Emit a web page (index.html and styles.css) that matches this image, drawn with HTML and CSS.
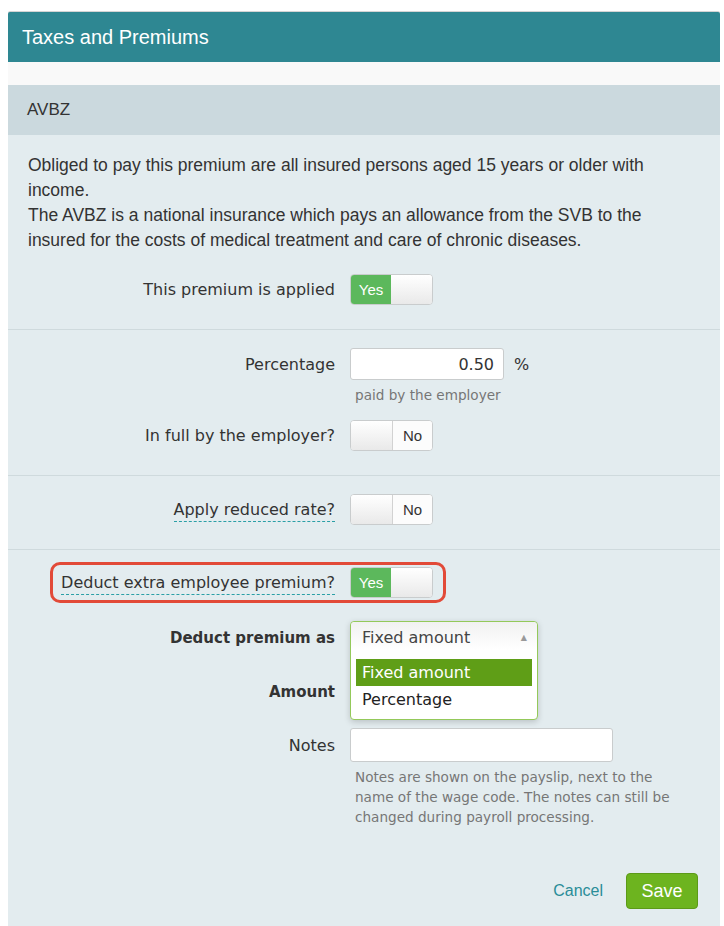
FILE: index.html
```html
<!DOCTYPE html>
<html lang="en">
<head>
  <meta charset="UTF-8">
  <title>Taxes and Premiums</title>
  <meta name="viewport" content="width=device-width, initial-scale=1.0">
  <link rel="stylesheet" href="styles.css">
</head>
<body>
  <div class="panel">
    <div class="panel-title">Taxes and Premiums</div>
    <div class="panel-gap"></div>
    <div class="panel-sub">AVBZ</div>
    <div class="panel-body">

      <div class="section first">
        <p class="intro">Obliged to pay this premium are all insured persons aged 15 years or older with income.<br>The AVBZ is a national insurance which pays an allowance from the SVB to the insured for the costs of medical treatment and care of chronic diseases.</p>
        <div class="row">
          <label class="row-label">This premium is applied</label>
          <div class="row-ctrl">
            <span class="toggle"><span class="toggle-yes">Yes</span><span class="toggle-knob"></span></span>
          </div>
        </div>
      </div>

      <div class="section">
        <div class="row">
          <label class="row-label">Percentage</label>
          <div class="row-ctrl">
            <input class="input input-num" type="text" value="0.50"><span class="unit">%</span>
          </div>
        </div>
        <div class="row help-row">
          <span></span>
          <div class="help">paid by the employer</div>
        </div>
        <div class="row mt-15">
          <label class="row-label">In full by the employer?</label>
          <div class="row-ctrl">
            <span class="toggle"><span class="toggle-knob left"></span><span class="toggle-no">No</span></span>
          </div>
        </div>
      </div>

      <div class="section">
        <div class="row">
          <label class="row-label"><span class="hint">Apply reduced rate?</span></label>
          <div class="row-ctrl">
            <span class="toggle"><span class="toggle-knob left"></span><span class="toggle-no">No</span></span>
          </div>
        </div>
      </div>

      <div class="section last">
        <div class="row marked">
          <div class="mark-box"></div>
          <label class="row-label"><span class="hint">Deduct extra employee premium?</span></label>
          <div class="row-ctrl">
            <span class="toggle"><span class="toggle-yes">Yes</span><span class="toggle-knob"></span></span>
          </div>
        </div>
        <div class="row mt-23">
          <label class="row-label bold">Deduct premium as</label>
          <div class="row-ctrl">
            <div class="select">
              <div class="select-pop">
                <div class="select-current">Fixed amount <span class="select-arrow">&#9650;</span></div>
                <div class="select-options">
                  <div class="option active">Fixed amount</div>
                  <div class="option">Percentage</div>
                </div>
              </div>
            </div>
          </div>
        </div>
        <div class="row mt-21">
          <label class="row-label bold">Amount</label>
          <div class="row-ctrl">
            <input class="input input-num" type="text" value="">
          </div>
        </div>
        <div class="row mt-20">
          <label class="row-label">Notes</label>
          <div class="row-ctrl">
            <input class="input input-notes" type="text" value="">
          </div>
        </div>
        <div class="row help-row mt-4">
          <span></span>
          <div class="help">Notes are shown on the payslip, next to the name of the wage code. The notes can still be changed during payroll processing.</div>
        </div>
        <div class="actions">
          <a class="cancel" href="#">Cancel</a>
          <button class="btn-save" type="button">Save</button>
        </div>
      </div>

    </div>
  </div>
</body>
</html>
```

FILE: styles.css
```css
html, body {margin:0; padding:0; background:#fff;}
body {font-family:"DejaVu Sans", Verdana, sans-serif; color:#333;}

.panel {width:712px; margin:12px 0 0 8px;}
.panel-title {
  height:50px; line-height:50px; padding-left:14px;
  background:#2e8792; color:#fff;
  font-family:"Liberation Sans", Arial, sans-serif; font-size:20px;
  border-radius:2px 2px 0 0; box-shadow:0 -1px 0 #d4d4d4;
}
.panel-gap {height:23px; background:#f9f9f9;}
.panel-sub {
  height:50px; line-height:50px; padding-left:19px;
  background:#cbd9de; color:#333;
  font-family:"Liberation Sans", Arial, sans-serif; font-size:17px;
}
.panel-body {background:#e3ecef; padding-bottom:30px;}

.section {padding:18px 0 24px; border-top:1px solid #cfdadd;}
.section.first {padding:18px 0 24px; border-top:none;}
.section.last {padding-top:17px;}

.intro {
  margin:0 0 21px; padding:0 20px; max-width:645px;
  font-family:"Liberation Sans", Arial, sans-serif; font-size:17.5px; line-height:25px; color:#333;
}

.row {display:grid; grid-template-columns:327px 1fr; column-gap:15px; align-items:center;}
.row-label {text-align:right; font-size:16px; color:#333;}
.row-label.bold {font-weight:bold; font-size:15px;}
.row-ctrl {display:flex; align-items:center;}
.mt-4 {margin-top:4px;} .mt-15 {margin-top:15px;} .mt-20 {margin-top:20px;}
.mt-21 {margin-top:21px;} .mt-23 {margin-top:23px;}

.hint {border-bottom:1px dashed #2a9fa6; padding-bottom:2px;}

.help-row {margin-top:5px;}
.help {padding-left:5px; font-size:13.6px; line-height:20px; color:#767676; max-width:320px;}

/* toggle switch */
.toggle {
  display:inline-flex; width:83px; height:31px; box-sizing:border-box;
  border:1px solid #c9cccd; border-radius:4px; overflow:hidden; background:#fff;
  font-family:"Liberation Sans", Arial, sans-serif; font-size:15px;
}
.toggle-yes {width:40px; background:#5cb85c; color:#fff; text-align:center; line-height:29px;}
.toggle-no {flex:1; background:#fcfcfc; color:#333; text-align:center; line-height:29px;}
.toggle-knob {flex:1; background:linear-gradient(#ffffff, #e9e9e9);}
.toggle-knob.left {flex:none; width:41px; border-right:1px solid #d2d2d2;}

/* inputs */
.input {
  box-sizing:border-box; height:32px; border:1px solid #c9cccd; border-radius:3px;
  background:#fff; font-family:"DejaVu Sans", Verdana, sans-serif; font-size:16px; color:#333;
  padding:0 9px; outline:none;
}
.input-num {width:154px; text-align:right;}
.input-notes {width:263px; height:34px;}
.unit {margin-left:10px; font-size:16px;}

/* open dropdown */
.select {position:relative; width:188px; height:34px;}
.select-pop {
  position:absolute; left:0; top:0; width:188px; box-sizing:border-box; z-index:5;
  background:#fff; border:1px solid #94c95a; border-radius:4px;
  box-shadow:0 2px 6px rgba(0,0,0,0.18);
}
.select-current {
  height:33px; line-height:32px; padding:0 10px 0 11px;
  display:flex; justify-content:space-between;
  background:linear-gradient(#f1f1f1, #ffffff 85%); color:#444; font-size:16px;
  border-radius:4px 4px 0 0;
}
.select-arrow {font-size:8px; color:#999;}
.select-options {padding:4px 5px 5px;}
.option {height:27px; line-height:27px; padding:0 6px; font-size:16px; color:#222;}
.option + .option {height:28px;}
.option.active {background:#5f9e17; color:#fff;}

/* highlight around a row */
.marked {position:relative;}
.mark-box {
  position:absolute; left:42px; top:-5px; width:396px; height:41px;
  box-sizing:border-box; border:3px solid #e24a38; border-radius:10px;
  pointer-events:none;
}

.actions {display:flex; justify-content:flex-end; align-items:center; gap:23px; margin-top:46px; padding-right:22px;}
.cancel {font-family:"Liberation Sans", Arial, sans-serif; font-size:16px; color:#2a8d98; text-decoration:none;}
.btn-save {
  width:72px; height:36px; border:1px solid #5c9a18; border-radius:4px;
  background:#6db41f; color:#fff; font-family:"Liberation Sans", Arial, sans-serif; font-size:18px;
  cursor:pointer;
}
```
